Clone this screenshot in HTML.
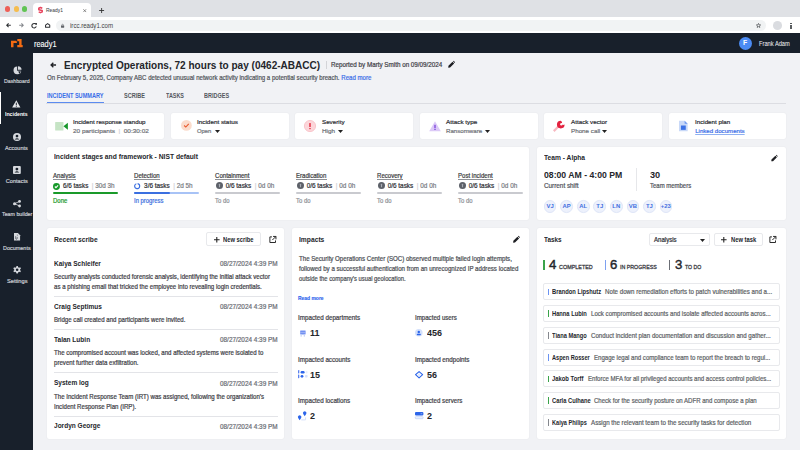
<!DOCTYPE html>
<html><head><meta charset="utf-8">
<style>
*{margin:0;padding:0;box-sizing:border-box}
html,body{width:800px;height:450px;overflow:hidden;background:#f1f2f5;font-family:"Liberation Sans",sans-serif;color:#222}
.a{position:absolute;white-space:nowrap;line-height:1}
svg{position:absolute;overflow:visible}
</style></head><body>
<div class="a" style="left:0px;top:0px;width:800px;height:17px;background:#dfe1e5;"></div>
<div class="a" style="left:5.199999999999999px;top:6.4px;width:5.2px;height:5.2px;background:#ee5f57;border-radius:50%"></div>
<div class="a" style="left:13.6px;top:6.4px;width:5.2px;height:5.2px;background:#f5bd4f;border-radius:50%"></div>
<div class="a" style="left:21.799999999999997px;top:6.4px;width:5.2px;height:5.2px;background:#61c454;border-radius:50%"></div>
<div class="a" style="left:33.1px;top:3.1px;width:58.2px;height:14px;background:#fff;border-radius:4px 4px 0 0"></div>
<svg style="left:38.1px;top:7.4px" width="5" height="6.2" viewBox="0 0 5 6.2"><path d="M4.3 1.3L2.5 0.5 0.8 1.3V2.8L4.2 3.4V4.9L2.5 5.7 0.7 4.9" stroke="#e9425c" stroke-width="1.5" fill="none" stroke-linejoin="round"/></svg>
<div class="a" style="left:46.25px;top:7.57px;font-size:5.8px;color:#45484d;-webkit-text-stroke-width:0.2px;transform:scaleX(0.8433);transform-origin:0 0;-webkit-text-stroke-width:0.05px;">Ready1</div>
<svg style="left:82.5px;top:9px" width="3.5" height="3.3" viewBox="0 0 4 4"><path d="M0.3 0.3L3.7 3.7M3.7 0.3L0.3 3.7" stroke="#555" stroke-width="0.8"/></svg>
<svg style="left:98.75px;top:8.1px" width="5.2" height="5" viewBox="0 0 5 5"><path d="M2.5 0V5M0 2.5H5" stroke="#333" stroke-width="0.9"/></svg>
<div class="a" style="left:0px;top:17px;width:800px;height:16px;background:#fff;"></div>
<div class="a" style="left:56.25px;top:20px;width:709.3px;height:11.25px;background:#f1f3f4;border-radius:6px"></div>
<svg style="left:6px;top:23.2px" width="5" height="4.6" viewBox="0 0 5 5"><path d="M5 2.5H0.9M2.6 0.5L0.6 2.5 2.6 4.5" stroke="#2d2f33" stroke-width="1.15" fill="none"/></svg>
<svg style="left:19.1px;top:23.2px" width="5" height="4.6" viewBox="0 0 5 5"><path d="M0 2.5H4.1M2.4 0.5L4.4 2.5 2.4 4.5" stroke="#85888d" stroke-width="1.1" fill="none"/></svg>
<svg style="left:31.1px;top:22.6px" width="6" height="5.3" viewBox="0 0 6 5.4"><path d="M5.1 1.6A2.3 2.3 0 1 0 5.3 3.4" stroke="#2d2f33" stroke-width="1.1" fill="none"/><path d="M3.7 0.1H5.9V2.3Z" fill="#2d2f33"/></svg>
<svg style="left:44.6px;top:23px" width="5.3" height="4.9" viewBox="0 0 5.4 5"><path d="M0.55 4.45V2.2L2.7 0.6 4.85 2.2V4.45Z" stroke="#2d2f33" stroke-width="1.05" fill="none" stroke-linejoin="round"/></svg>
<svg style="left:61.25px;top:23.6px" width="3.2" height="3.7" viewBox="0 0 4 4.5"><rect x="0" y="1.8" width="4" height="2.7" rx="0.4" fill="#5f6368"/><path d="M0.9 2V1.4A1.1 1.1 0 0 1 3.1 1.4V2" stroke="#5f6368" stroke-width="0.7" fill="none"/></svg>
<div class="a" style="left:69.75px;top:22.08px;font-size:7px;color:#3c4043;-webkit-text-stroke-width:0.2px;transform:scaleX(0.8701);transform-origin:0 0;-webkit-text-stroke-width:0;">ircc.ready1.com</div>
<svg style="left:756.2px;top:23px" width="5" height="4.9" viewBox="0 0 10 10"><path d="M5 0.8L6.2 3.8 9.4 4 6.9 6 7.7 9.2 5 7.4 2.3 9.2 3.1 6 0.6 4 3.8 3.8Z" stroke="#3c4043" stroke-width="1.3" fill="none"/></svg>
<div class="a" style="left:773px;top:21.2px;width:9px;height:8.6px;background:#dadce0;border-radius:50%"></div>
<div class="a" style="left:790.1px;top:22.9px;width:1.5px;height:1.5px;background:#3c4043;border-radius:50%"></div>
<div class="a" style="left:790.1px;top:25.1px;width:1.5px;height:1.5px;background:#3c4043;border-radius:50%"></div>
<div class="a" style="left:790.1px;top:27.3px;width:1.5px;height:1.5px;background:#3c4043;border-radius:50%"></div>
<div class="a" style="left:0px;top:33px;width:800px;height:20px;background:#18202b;"></div>
<svg style="left:11.4px;top:39.4px" width="11.7" height="8.3" viewBox="0 0 11.7 8.3"><path d="M0 1.8H4.6Q5.9 1.8 5.9 3.1V4.1H3.6V4H2.5V8.2H0Z" fill="#f56b12"/><path d="M8.2 0H10.6V6H11.7V8.2H6.3V6H8.2V2.3H6.3V0Z" fill="#f56b12"/></svg>
<div class="a" style="left:33.70px;top:39.79px;font-size:8.8px;color:#ffffff;-webkit-text-stroke-width:0.2px;transform:scaleX(0.8356);transform-origin:0 0;-webkit-text-stroke-width:0.1px;">ready1</div>
<div class="a" style="left:738.9px;top:36.8px;width:13.2px;height:13px;background:#4b8bf4;border-radius:50%"></div>
<div class="a" style="left:743.40px;top:39.22px;font-size:7.4px;color:#ffffff;font-weight:bold;transform:scaleX(0.9304);transform-origin:0 0;">F</div>
<div class="a" style="left:758.90px;top:40.08px;font-size:7px;color:#e8eaed;-webkit-text-stroke-width:0.2px;transform:scaleX(0.8163);transform-origin:0 0;-webkit-text-stroke-width:0.05px;">Frank Adam</div>
<div class="a" style="left:0px;top:53px;width:33px;height:397px;background:#18202b;"></div>
<div class="a" style="left:0px;top:91.8px;width:1.3px;height:32.7px;background:#ffffff;"></div>
<svg style="left:12.7px;top:65.7px" width="8.9" height="8.6" viewBox="0 0 10 10"><path d="M4.6 0.6A4.5 4.5 0 1 0 9.4 5.4H4.6Z" fill="#d5d8dd"/><path d="M5.6 0.2A4.4 4.4 0 0 1 9.8 4.4H5.6Z" fill="#d5d8dd"/><path d="M6 6.2H9.2L7.2 9.2Z" fill="#18202b"/></svg>
<div class="a" style="left:4.00px;top:79.10px;font-size:5.6px;color:#c9cdd3;-webkit-text-stroke-width:0.2px;transform:scaleX(0.9349);transform-origin:0 0;">Dashboard</div>
<svg style="left:12.4px;top:99.6px" width="8.6" height="7.6" viewBox="0 0 10 9"><path d="M5 0.2L9.9 8.8H0.1Z" fill="#e4e6ea"/><rect x="4.45" y="3.2" width="1.1" height="3" fill="#18202b"/><rect x="4.45" y="6.9" width="1.1" height="1.1" fill="#18202b"/></svg>
<div class="a" style="left:5.30px;top:111.77px;font-size:5.8px;color:#ffffff;font-weight:bold;transform:scaleX(0.8915);transform-origin:0 0;">Incidents</div>
<svg style="left:12.9px;top:133px" width="8" height="8" viewBox="0 0 10 10"><circle cx="5" cy="5" r="5" fill="#d5d8dd"/><circle cx="5" cy="3.9" r="1.7" fill="#18202b"/><path d="M2.2 7.7Q5 5.3 7.8 7.7V8H2.2Z" fill="#18202b"/></svg>
<div class="a" style="left:5.30px;top:145.50px;font-size:5.6px;color:#c9cdd3;-webkit-text-stroke-width:0.2px;transform:scaleX(0.9894);transform-origin:0 0;">Accounts</div>
<svg style="left:13px;top:166px" width="7.8" height="8" viewBox="0 0 10 10"><rect x="0" y="0" width="10" height="10" rx="1.2" fill="#d5d8dd"/><circle cx="5" cy="3.8" r="1.8" fill="#18202b"/><path d="M2 8.2Q5 5.2 8 8.2Z" fill="#18202b"/></svg>
<div class="a" style="left:5.80px;top:178.90px;font-size:5.6px;color:#c9cdd3;-webkit-text-stroke-width:0.2px;">Contacts</div>
<svg style="left:12.8px;top:199.7px" width="8.2" height="7.4" viewBox="0 0 10 9"><circle cx="8" cy="1.7" r="1.7" fill="#d5d8dd"/><circle cx="1.9" cy="4.5" r="1.9" fill="#d5d8dd"/><circle cx="8" cy="7.3" r="1.7" fill="#d5d8dd"/><path d="M8 1.7L1.9 4.5 8 7.3" stroke="#d5d8dd" stroke-width="1" fill="none"/></svg>
<div class="a" style="left:1.55px;top:212.30px;font-size:5.6px;color:#c9cdd3;-webkit-text-stroke-width:0.2px;transform:scaleX(0.9467);transform-origin:0 0;">Team builder</div>
<svg style="left:13.7px;top:233px" width="6.1" height="7.6" viewBox="0 0 8 10"><path d="M0 0H5.2L8 2.8V10H0Z" fill="#d5d8dd"/><path d="M2.2 4.2V7.2A1 1 0 0 0 4.2 7.2V5.2M4.4 2.2V3.5" stroke="#18202b" stroke-width="0.7" fill="none"/></svg>
<div class="a" style="left:2.90px;top:246.10px;font-size:5.6px;color:#c9cdd3;-webkit-text-stroke-width:0.2px;transform:scaleX(0.9776);transform-origin:0 0;">Documents</div>
<svg style="left:12.7px;top:266.2px" width="8.3" height="7.6" viewBox="0 0 10 10"><path d="M4.1 0H5.9L6.3 1.6 7.5 2.3 9.1 1.8 10 3.4 8.8 4.5V5.5L10 6.6 9.1 8.2 7.5 7.7 6.3 8.4 5.9 10H4.1L3.7 8.4 2.5 7.7 0.9 8.2 0 6.6 1.2 5.5V4.5L0 3.4 0.9 1.8 2.5 2.3 3.7 1.6Z" fill="#d5d8dd"/><circle cx="5" cy="5" r="1.7" fill="#18202b"/></svg>
<div class="a" style="left:6.50px;top:279.30px;font-size:5.6px;color:#c9cdd3;-webkit-text-stroke-width:0.2px;transform:scaleX(1.0126);transform-origin:0 0;">Settings</div>
<svg style="left:50px;top:62px" width="6.4" height="6" viewBox="0 0 8 8"><path d="M7.8 4H1.4M4.2 0.9L1.1 4 4.2 7.1" stroke="#222428" stroke-width="1.7" fill="none"/></svg>
<div class="a" style="left:63.80px;top:60.16px;font-size:11.5px;color:#24262b;font-weight:bold;transform:scaleX(0.8735);transform-origin:0 0;">Encrypted Operations, 72 hours to pay (0462-ABACC)</div>
<div class="a" style="left:326px;top:61px;width:0.8px;height:7.5px;background:#d3d4d8;"></div>
<div class="a" style="left:331.00px;top:62.44px;font-size:6.6px;color:#3e4046;-webkit-text-stroke-width:0.2px;transform:scaleX(0.9517);transform-origin:0 0;">Reported by Marty Smith on 09/09/2024</div>
<svg style="left:448px;top:61px" width="7" height="6.8" viewBox="0 0 10 10"><path d="M0.2 9.8L0.5 7.1 6.5 1.1 8.9 3.5 2.9 9.5Z M7.2 0.5L8.2-0.3 10.3 1.8 9.5 2.8Z" fill="#1e1f23"/></svg>
<div class="a" style="left:46.70px;top:75.04px;font-size:6.6px;color:#50535a;-webkit-text-stroke-width:0.2px;transform:scaleX(0.9228);transform-origin:0 0;">On February 5, 2025, Company ABC detected unusual network activity indicating a potential security breach. <span style="color:#3a6ee8">Read more</span></div>
<div class="a" style="left:46.70px;top:91.55px;font-size:7.2px;color:#3a6ee8;font-weight:bold;transform:scaleX(0.7760);transform-origin:0 0;">INCIDENT SUMMARY</div>
<div class="a" style="left:124.00px;top:91.55px;font-size:7.2px;color:#55585e;font-weight:bold;transform:scaleX(0.7716);transform-origin:0 0;">SCRIBE</div>
<div class="a" style="left:165.70px;top:91.55px;font-size:7.2px;color:#55585e;font-weight:bold;transform:scaleX(0.7541);transform-origin:0 0;">TASKS</div>
<div class="a" style="left:203.90px;top:91.55px;font-size:7.2px;color:#55585e;font-weight:bold;transform:scaleX(0.7653);transform-origin:0 0;">BRIDGES</div>
<div class="a" style="left:46px;top:103.2px;width:740px;height:0.9px;background:#dcdde2;"></div>
<div class="a" style="left:46.7px;top:101.9px;width:57.2px;height:1.5px;background:#5b8bf0;"></div>
<div class="a" style="left:46.5px;top:112.8px;width:117.9px;height:26.2px;background:#fff;border-radius:2px;box-shadow:0 0 1.5px rgba(30,30,70,0.08)"></div>
<div class="a" style="left:170.9px;top:112.8px;width:117.9px;height:26.2px;background:#fff;border-radius:2px;box-shadow:0 0 1.5px rgba(30,30,70,0.08)"></div>
<div class="a" style="left:295.3px;top:112.8px;width:117.9px;height:26.2px;background:#fff;border-radius:2px;box-shadow:0 0 1.5px rgba(30,30,70,0.08)"></div>
<div class="a" style="left:419.7px;top:112.8px;width:117.9px;height:26.2px;background:#fff;border-radius:2px;box-shadow:0 0 1.5px rgba(30,30,70,0.08)"></div>
<div class="a" style="left:544.1px;top:112.8px;width:117.9px;height:26.2px;background:#fff;border-radius:2px;box-shadow:0 0 1.5px rgba(30,30,70,0.08)"></div>
<div class="a" style="left:668.5px;top:112.8px;width:117.9px;height:26.2px;background:#fff;border-radius:2px;box-shadow:0 0 1.5px rgba(30,30,70,0.08)"></div>
<svg style="left:55px;top:122px" width="13" height="8.8" viewBox="0 0 13 9"><rect x="0" y="0" width="8.5" height="8.8" rx="0.6" fill="#c6e4c5"/><path d="M13 0.8V8L8.5 4.4Z" fill="#17972a"/></svg>
<div class="a" style="left:73.00px;top:119.02px;font-size:6.1px;color:#2c2e33;-webkit-text-stroke-width:0.2px;transform:scaleX(1.0146);transform-origin:0 0;">Incident response standup</div>
<div class="a" style="left:73.00px;top:128.02px;font-size:6.1px;color:#6f7278;-webkit-text-stroke-width:0.2px;transform:scaleX(1.0571);transform-origin:0 0;">20 participants&nbsp; <span style="color:#d0d1d5">|</span> &nbsp;00:30:02</div>
<svg style="left:180.7px;top:119.9px" width="10.8" height="10.8" viewBox="0 0 11 11"><circle cx="5.5" cy="5.5" r="5.5" fill="#fbdccc"/><path d="M3.2 5.6L4.9 7.2 7.9 3.9" stroke="#e8572a" stroke-width="1.1" fill="none"/></svg>
<div class="a" style="left:197.30px;top:119.02px;font-size:6.1px;color:#2c2e33;-webkit-text-stroke-width:0.2px;transform:scaleX(1.0395);transform-origin:0 0;">Incident status</div>
<div class="a" style="left:197.30px;top:128.02px;font-size:6.1px;color:#6f7278;-webkit-text-stroke-width:0.2px;transform:scaleX(0.9588);transform-origin:0 0;">Open</div>
<svg style="left:214.6px;top:129.8px" width="5" height="3" viewBox="0 0 5 3"><path d="M0 0H5L2.5 3Z" fill="#222"/></svg>
<svg style="left:304px;top:120px" width="12" height="12" viewBox="0 0 12 12"><circle cx="6" cy="6" r="5.6" fill="#fcd6da" stroke="#f7bcc3" stroke-width="0.8"/><rect x="5.3" y="2.9" width="1.4" height="4.2" rx="0.4" fill="#e3243a"/><rect x="5.3" y="7.9" width="1.4" height="1.3" rx="0.4" fill="#e3243a"/></svg>
<div class="a" style="left:321.80px;top:119.02px;font-size:6.1px;color:#2c2e33;-webkit-text-stroke-width:0.2px;transform:scaleX(1.0218);transform-origin:0 0;">Severity</div>
<div class="a" style="left:321.80px;top:128.02px;font-size:6.1px;color:#6f7278;-webkit-text-stroke-width:0.2px;transform:scaleX(1.0371);transform-origin:0 0;">High</div>
<svg style="left:337.8px;top:129.8px" width="5" height="3" viewBox="0 0 5 3"><path d="M0 0H5L2.5 3Z" fill="#222"/></svg>
<svg style="left:429px;top:120.5px" width="12" height="10.5" viewBox="0 0 12 10.5"><path d="M6 0.3L11.8 10.3H0.2Z" fill="#dcc9f7"/><rect x="5.45" y="3.8" width="1.1" height="3.4" fill="#6a2ad8"/><rect x="5.45" y="7.9" width="1.1" height="1.1" fill="#6a2ad8"/></svg>
<div class="a" style="left:446.20px;top:119.02px;font-size:6.1px;color:#2c2e33;-webkit-text-stroke-width:0.2px;transform:scaleX(1.0376);transform-origin:0 0;">Attack type</div>
<div class="a" style="left:446.20px;top:128.02px;font-size:6.1px;color:#6f7278;-webkit-text-stroke-width:0.2px;transform:scaleX(1.0075);transform-origin:0 0;">Ransomware</div>
<svg style="left:484.5px;top:129.8px" width="5" height="3" viewBox="0 0 5 3"><path d="M0 0H5L2.5 3Z" fill="#222"/></svg>
<svg style="left:553px;top:120.2px" width="12.3" height="12" viewBox="0 0 12.5 12"><path d="M0.8 11.2L5.2 6.8" stroke="#f7b8c0" stroke-width="2.2"/><path d="M7.9 0.7A3.9 3.9 0 1 0 11.8 4.6L10.2 4.9 8.9 3.6 9.2 1.9Z" fill="#e3223f"/><circle cx="8.5" cy="4.2" r="1.2" fill="#fff"/></svg>
<div class="a" style="left:570.80px;top:119.02px;font-size:6.1px;color:#2c2e33;-webkit-text-stroke-width:0.2px;transform:scaleX(1.0267);transform-origin:0 0;">Attack vector</div>
<div class="a" style="left:570.80px;top:128.02px;font-size:6.1px;color:#6f7278;-webkit-text-stroke-width:0.2px;transform:scaleX(1.0250);transform-origin:0 0;">Phone call</div>
<svg style="left:601.8px;top:129.8px" width="5" height="3" viewBox="0 0 5 3"><path d="M0 0H5L2.5 3Z" fill="#222"/></svg>
<svg style="left:679px;top:120px" width="8.7" height="12" viewBox="0 0 9 12"><path d="M0 0.5H5.8L9 3.7V11.5H0Z" fill="#c9d9f8"/><path d="M5.8 0.5V3.7H9Z" fill="#6f9af0"/><rect x="2" y="5.5" width="5" height="4.5" fill="#3c72e6"/></svg>
<div class="a" style="left:694.90px;top:119.02px;font-size:6.1px;color:#2c2e33;-webkit-text-stroke-width:0.2px;transform:scaleX(1.0177);transform-origin:0 0;">Incident plan</div>
<div class="a" style="left:695.20px;top:128.02px;font-size:6.1px;color:#3a6ee8;-webkit-text-stroke-width:0.2px;text-decoration:underline;text-decoration-color:#8fb0f2;">Linked documents</div>
<div class="a" style="left:47px;top:146.8px;width:481.5px;height:73.7px;background:#fff;border-radius:2px;box-shadow:0 0 1.5px rgba(30,30,70,0.08)"></div>
<div class="a" style="left:53.70px;top:154.46px;font-size:7.1px;color:#24262b;font-weight:bold;transform:scaleX(0.9486);transform-origin:0 0;">Incident stages and framework - NIST default</div>
<div class="a" style="left:53.30px;top:172.98px;font-size:6.4px;color:#3a3c41;-webkit-text-stroke-width:0.2px;transform:scaleX(0.9500);transform-origin:0 0;">Analysis</div>
<div class="a" style="left:53.3px;top:178.9px;width:22.6px;height:0.7px;background:#8e9196;"></div>
<svg style="left:53.199999999999996px;top:182.5px" width="6.9" height="6.9" viewBox="0 0 10 10"><circle cx="5" cy="5" r="5" fill="#17992a"/><path d="M2.7 5.1L4.3 6.7 7.4 3.5" stroke="#fff" stroke-width="1.6" fill="none"/></svg>
<div class="a" style="left:63.10px;top:182.58px;font-size:6.4px;color:#2c2e33;-webkit-text-stroke-width:0.2px;transform:scaleX(0.9887);transform-origin:0 0;">6/6 tasks <span style="color:#d0d1d5">&nbsp;|&nbsp;</span><span style="color:#7a7d83">30d 3h</span></div>
<div class="a" style="left:53.3px;top:192.2px;width:64.5px;height:2px;background:#1a9a2a;border-radius:1px"></div>
<div class="a" style="left:53.30px;top:197.68px;font-size:6.4px;color:#1a9a2a;-webkit-text-stroke-width:0.2px;transform:scaleX(0.9349);transform-origin:0 0;">Done</div>
<div class="a" style="left:134.30px;top:172.98px;font-size:6.4px;color:#3a3c41;-webkit-text-stroke-width:0.2px;transform:scaleX(0.9500);transform-origin:0 0;">Detection</div>
<div class="a" style="left:134.3px;top:178.9px;width:25.7px;height:0.7px;background:#8e9196;"></div>
<svg style="left:134.3px;top:182.9px" width="6.3" height="6.3" viewBox="0 0 10 10"><circle cx="5" cy="5" r="4" stroke="#3b6fe0" stroke-width="1.8" fill="none" stroke-dasharray="22.5 2.6" transform="rotate(-80 5 5)"/></svg>
<div class="a" style="left:144.10px;top:182.58px;font-size:6.4px;color:#2c2e33;-webkit-text-stroke-width:0.2px;">3/6 tasks <span style="color:#d0d1d5">&nbsp;|&nbsp;</span><span style="color:#7a7d83">2d 5h</span></div>
<div class="a" style="left:134.3px;top:192.2px;width:64.5px;height:2px;background:#a8c3f6;border-radius:1px"></div>
<div class="a" style="left:134.3px;top:192.2px;width:35.5px;height:2px;background:#3b6fe0;border-radius:1px"></div>
<div class="a" style="left:134.30px;top:197.68px;font-size:6.4px;color:#3b6fe0;-webkit-text-stroke-width:0.2px;transform:scaleX(0.9210);transform-origin:0 0;">In progress</div>
<div class="a" style="left:215.30px;top:172.98px;font-size:6.4px;color:#3a3c41;-webkit-text-stroke-width:0.2px;transform:scaleX(0.9500);transform-origin:0 0;">Containment</div>
<div class="a" style="left:215.3px;top:178.9px;width:34.5px;height:0.7px;background:#8e9196;"></div>
<svg style="left:215.5px;top:182.4px" width="7" height="7" viewBox="0 0 10 10"><circle cx="5" cy="5" r="5" fill="#5d6169"/><rect x="4.2" y="2.4" width="1.6" height="5.2" rx="0.8" fill="#a9adb5"/></svg>
<div class="a" style="left:225.70px;top:182.58px;font-size:6.4px;color:#2c2e33;-webkit-text-stroke-width:0.2px;">0/6 tasks <span style="color:#d0d1d5">&nbsp;|&nbsp;</span><span style="color:#7a7d83">0d 0h</span></div>
<div class="a" style="left:215.3px;top:192.2px;width:64.5px;height:2px;background:#c9cacf;border-radius:1px"></div>
<div class="a" style="left:215.30px;top:197.68px;font-size:6.4px;color:#8d9096;-webkit-text-stroke-width:0.2px;transform:scaleX(0.9266);transform-origin:0 0;">To do</div>
<div class="a" style="left:296.30px;top:172.98px;font-size:6.4px;color:#3a3c41;-webkit-text-stroke-width:0.2px;transform:scaleX(0.9500);transform-origin:0 0;">Eradication</div>
<div class="a" style="left:296.3px;top:178.9px;width:30.4px;height:0.7px;background:#8e9196;"></div>
<svg style="left:296.5px;top:182.4px" width="7" height="7" viewBox="0 0 10 10"><circle cx="5" cy="5" r="5" fill="#5d6169"/><rect x="4.2" y="2.4" width="1.6" height="5.2" rx="0.8" fill="#a9adb5"/></svg>
<div class="a" style="left:306.70px;top:182.58px;font-size:6.4px;color:#2c2e33;-webkit-text-stroke-width:0.2px;">0/6 tasks <span style="color:#d0d1d5">&nbsp;|&nbsp;</span><span style="color:#7a7d83">0d 0h</span></div>
<div class="a" style="left:296.3px;top:192.2px;width:64.5px;height:2px;background:#c9cacf;border-radius:1px"></div>
<div class="a" style="left:296.30px;top:197.68px;font-size:6.4px;color:#8d9096;-webkit-text-stroke-width:0.2px;transform:scaleX(0.9266);transform-origin:0 0;">To do</div>
<div class="a" style="left:377.30px;top:172.98px;font-size:6.4px;color:#3a3c41;-webkit-text-stroke-width:0.2px;transform:scaleX(0.9500);transform-origin:0 0;">Recovery</div>
<div class="a" style="left:377.3px;top:178.9px;width:25.7px;height:0.7px;background:#8e9196;"></div>
<svg style="left:377.5px;top:182.4px" width="7" height="7" viewBox="0 0 10 10"><circle cx="5" cy="5" r="5" fill="#5d6169"/><rect x="4.2" y="2.4" width="1.6" height="5.2" rx="0.8" fill="#a9adb5"/></svg>
<div class="a" style="left:387.70px;top:182.58px;font-size:6.4px;color:#2c2e33;-webkit-text-stroke-width:0.2px;">0/6 tasks <span style="color:#d0d1d5">&nbsp;|&nbsp;</span><span style="color:#7a7d83">0d 0h</span></div>
<div class="a" style="left:377.3px;top:192.2px;width:64.5px;height:2px;background:#c9cacf;border-radius:1px"></div>
<div class="a" style="left:377.30px;top:197.68px;font-size:6.4px;color:#8d9096;-webkit-text-stroke-width:0.2px;transform:scaleX(0.9266);transform-origin:0 0;">To do</div>
<div class="a" style="left:458.30px;top:172.98px;font-size:6.4px;color:#3a3c41;-webkit-text-stroke-width:0.2px;transform:scaleX(0.9500);transform-origin:0 0;">Post incident</div>
<div class="a" style="left:458.3px;top:178.9px;width:34.8px;height:0.7px;background:#8e9196;"></div>
<svg style="left:458.5px;top:182.4px" width="7" height="7" viewBox="0 0 10 10"><circle cx="5" cy="5" r="5" fill="#5d6169"/><rect x="4.2" y="2.4" width="1.6" height="5.2" rx="0.8" fill="#a9adb5"/></svg>
<div class="a" style="left:468.70px;top:182.58px;font-size:6.4px;color:#2c2e33;-webkit-text-stroke-width:0.2px;">0/6 tasks <span style="color:#d0d1d5">&nbsp;|&nbsp;</span><span style="color:#7a7d83">0d 0h</span></div>
<div class="a" style="left:458.3px;top:192.2px;width:64.5px;height:2px;background:#c9cacf;border-radius:1px"></div>
<div class="a" style="left:458.30px;top:197.68px;font-size:6.4px;color:#8d9096;-webkit-text-stroke-width:0.2px;transform:scaleX(0.9266);transform-origin:0 0;">To do</div>
<div class="a" style="left:537.2px;top:146.8px;width:248.5px;height:73.7px;background:#fff;border-radius:2px;box-shadow:0 0 1.5px rgba(30,30,70,0.08)"></div>
<div class="a" style="left:543.60px;top:154.05px;font-size:7.2px;color:#24262b;font-weight:bold;transform:scaleX(0.9267);transform-origin:0 0;">Team - Alpha</div>
<svg style="left:770.5px;top:155px" width="6.8" height="6.5" viewBox="0 0 10 10"><path d="M0.2 9.8L0.5 7.1 6.5 1.1 8.9 3.5 2.9 9.5Z M7.2 0.5L8.2-0.3 10.3 1.8 9.5 2.8Z" fill="#1e1f23"/></svg>
<div class="a" style="left:543.60px;top:171.26px;font-size:8.4px;color:#24262b;font-weight:bold;transform:scaleX(1.0347);transform-origin:0 0;">08:00 AM - 4:00 PM</div>
<div class="a" style="left:543.60px;top:183.18px;font-size:6.4px;color:#50535a;-webkit-text-stroke-width:0.2px;transform:scaleX(0.9929);transform-origin:0 0;">Current shift</div>
<div class="a" style="left:635.9px;top:168px;width:0.8px;height:23px;background:#e6e7ea;"></div>
<div class="a" style="left:649.80px;top:171.26px;font-size:8.4px;color:#24262b;font-weight:bold;transform:scaleX(1.0940);transform-origin:0 0;">30</div>
<div class="a" style="left:649.80px;top:183.18px;font-size:6.4px;color:#50535a;-webkit-text-stroke-width:0.2px;transform:scaleX(0.9343);transform-origin:0 0;">Team members</div>
<div class="a" style="left:543.90px;top:200px;width:12.6px;height:12.6px;border-radius:50%;background:#edf1fc;border:0.8px solid #dfe6f8;color:#3f6fdf;font-size:5.9px;font-weight:bold;text-align:center;line-height:11.4px">VJ</div>
<div class="a" style="left:560.42px;top:200px;width:12.6px;height:12.6px;border-radius:50%;background:#edf1fc;border:0.8px solid #dfe6f8;color:#3f6fdf;font-size:5.9px;font-weight:bold;text-align:center;line-height:11.4px">AP</div>
<div class="a" style="left:576.94px;top:200px;width:12.6px;height:12.6px;border-radius:50%;background:#edf1fc;border:0.8px solid #dfe6f8;color:#3f6fdf;font-size:5.9px;font-weight:bold;text-align:center;line-height:11.4px">AL</div>
<div class="a" style="left:593.46px;top:200px;width:12.6px;height:12.6px;border-radius:50%;background:#edf1fc;border:0.8px solid #dfe6f8;color:#3f6fdf;font-size:5.9px;font-weight:bold;text-align:center;line-height:11.4px">TJ</div>
<div class="a" style="left:609.98px;top:200px;width:12.6px;height:12.6px;border-radius:50%;background:#edf1fc;border:0.8px solid #dfe6f8;color:#3f6fdf;font-size:5.9px;font-weight:bold;text-align:center;line-height:11.4px">LN</div>
<div class="a" style="left:626.50px;top:200px;width:12.6px;height:12.6px;border-radius:50%;background:#edf1fc;border:0.8px solid #dfe6f8;color:#3f6fdf;font-size:5.9px;font-weight:bold;text-align:center;line-height:11.4px">VB</div>
<div class="a" style="left:643.02px;top:200px;width:12.6px;height:12.6px;border-radius:50%;background:#edf1fc;border:0.8px solid #dfe6f8;color:#3f6fdf;font-size:5.9px;font-weight:bold;text-align:center;line-height:11.4px">TJ</div>
<div class="a" style="left:659.54px;top:200px;width:12.6px;height:12.6px;border-radius:50%;background:#edf1fc;border:0.8px solid #dfe6f8;color:#3f6fdf;font-size:5.9px;font-weight:bold;text-align:center;line-height:11.4px">+23</div>
<div class="a" style="left:47.1px;top:228.3px;width:237.3px;height:211.1px;background:#fff;border-radius:2px;box-shadow:0 0 1.5px rgba(30,30,70,0.08)"></div>
<div class="a" style="left:53.70px;top:236.05px;font-size:7.2px;color:#24262b;font-weight:bold;transform:scaleX(0.9252);transform-origin:0 0;">Recent scribe</div>
<div class="a" style="left:206.4px;top:232.4px;width:54.3px;height:13.9px;background:#fff;border:0.8px solid #e8e9ec;border-radius:2px"></div>
<svg style="left:213.8px;top:236.6px" width="5.6" height="5.6" viewBox="0 0 6 6"><path d="M3 0V6M0 3H6" stroke="#222" stroke-width="1.15"/></svg>
<div class="a" style="left:223.30px;top:236.99px;font-size:6.3px;color:#24262b;font-weight:bold;transform:scaleX(0.9199);transform-origin:0 0;">New scribe</div>
<svg style="left:268.7px;top:235.8px" width="7.4" height="7.4" viewBox="0 0 10 10"><path d="M4 1.2H1.2V8.8H8.8V6" stroke="#222" stroke-width="1.3" fill="none"/><path d="M5.5 0.6H9.4V4.5M9.2 0.8L4.5 5.5" stroke="#222" stroke-width="1.3" fill="none"/></svg>
<div class="a" style="left:53.70px;top:260.86px;font-size:7.1px;color:#24262b;font-weight:bold;transform:scaleX(0.9200);transform-origin:0 0;">Kaiya Schleifer</div>
<div class="a" style="left:220.30px;top:261.19px;font-size:6.3px;color:#6b6e75;-webkit-text-stroke-width:0.2px;transform:scaleX(1.0153);transform-origin:0 0;">08/27/2024 4:39 PM</div>
<div class="a" style="left:53.70px;top:274.19px;font-size:6.3px;color:#3e4046;-webkit-text-stroke-width:0.2px;transform:scaleX(0.9700);transform-origin:0 0;">Security analysts conducted forensic analysis, identifying the initial attack vector</div>
<div class="a" style="left:53.70px;top:284.19px;font-size:6.3px;color:#3e4046;-webkit-text-stroke-width:0.2px;transform:scaleX(0.9700);transform-origin:0 0;">as a phishing email that tricked the employee into revealing login credentials.</div>
<div class="a" style="left:53.7px;top:296px;width:224.2px;height:0.8px;background:#e3e4e8;"></div>
<div class="a" style="left:53.70px;top:304.06px;font-size:7.1px;color:#24262b;font-weight:bold;transform:scaleX(0.9200);transform-origin:0 0;">Craig Septimus</div>
<div class="a" style="left:220.30px;top:304.39px;font-size:6.3px;color:#6b6e75;-webkit-text-stroke-width:0.2px;transform:scaleX(1.0153);transform-origin:0 0;">08/27/2024 4:39 PM</div>
<div class="a" style="left:53.70px;top:317.39px;font-size:6.3px;color:#3e4046;-webkit-text-stroke-width:0.2px;transform:scaleX(0.9700);transform-origin:0 0;">Bridge call created and participants were invited.</div>
<div class="a" style="left:53.7px;top:328.75px;width:224.2px;height:0.8px;background:#e3e4e8;"></div>
<div class="a" style="left:53.70px;top:336.66px;font-size:7.1px;color:#24262b;font-weight:bold;transform:scaleX(0.9200);transform-origin:0 0;">Talan Lubin</div>
<div class="a" style="left:220.30px;top:336.99px;font-size:6.3px;color:#6b6e75;-webkit-text-stroke-width:0.2px;transform:scaleX(1.0153);transform-origin:0 0;">08/27/2024 4:39 PM</div>
<div class="a" style="left:53.70px;top:349.99px;font-size:6.3px;color:#3e4046;-webkit-text-stroke-width:0.2px;transform:scaleX(0.9700);transform-origin:0 0;">The compromised account was locked, and affected systems were isolated to</div>
<div class="a" style="left:53.70px;top:359.99px;font-size:6.3px;color:#3e4046;-webkit-text-stroke-width:0.2px;transform:scaleX(0.9700);transform-origin:0 0;">prevent further data exfiltration.</div>
<div class="a" style="left:53.7px;top:372.2px;width:224.2px;height:0.8px;background:#e3e4e8;"></div>
<div class="a" style="left:53.70px;top:380.46px;font-size:7.1px;color:#24262b;font-weight:bold;transform:scaleX(0.9200);transform-origin:0 0;">System log</div>
<div class="a" style="left:220.30px;top:380.79px;font-size:6.3px;color:#6b6e75;-webkit-text-stroke-width:0.2px;transform:scaleX(1.0153);transform-origin:0 0;">08/27/2024 4:39 PM</div>
<div class="a" style="left:53.70px;top:393.79px;font-size:6.3px;color:#3e4046;-webkit-text-stroke-width:0.2px;transform:scaleX(0.9700);transform-origin:0 0;">The Incident Response Team (IRT) was assigned, following the organization’s</div>
<div class="a" style="left:53.70px;top:403.79px;font-size:6.3px;color:#3e4046;-webkit-text-stroke-width:0.2px;transform:scaleX(0.9700);transform-origin:0 0;">Incident Response Plan (IRP).</div>
<div class="a" style="left:53.7px;top:416px;width:224.2px;height:0.8px;background:#e3e4e8;"></div>
<div class="a" style="left:53.70px;top:423.46px;font-size:7.1px;color:#24262b;font-weight:bold;transform:scaleX(0.9200);transform-origin:0 0;">Jordyn George</div>
<div class="a" style="left:220.30px;top:423.79px;font-size:6.3px;color:#6b6e75;-webkit-text-stroke-width:0.2px;transform:scaleX(1.0153);transform-origin:0 0;">08/27/2024 4:39 PM</div>
<div class="a" style="left:292.1px;top:228.3px;width:236.5px;height:211.1px;background:#fff;border-radius:2px;box-shadow:0 0 1.5px rgba(30,30,70,0.08)"></div>
<div class="a" style="left:298.70px;top:235.85px;font-size:7.2px;color:#24262b;font-weight:bold;transform:scaleX(0.9333);transform-origin:0 0;">Impacts</div>
<svg style="left:513.4px;top:236px" width="6.8" height="6.8" viewBox="0 0 10 10"><path d="M0.2 9.8L0.5 7.1 6.5 1.1 8.9 3.5 2.9 9.5Z M7.2 0.5L8.2-0.3 10.3 1.8 9.5 2.8Z" fill="#1e1f23"/></svg>
<div class="a" style="left:298.70px;top:255.99px;font-size:6.3px;color:#4a4d53;-webkit-text-stroke-width:0.2px;transform:scaleX(0.9732);transform-origin:0 0;">The Security Operations Center (SOC) observed multiple failed login attempts,</div>
<div class="a" style="left:298.70px;top:265.99px;font-size:6.3px;color:#4a4d53;-webkit-text-stroke-width:0.2px;transform:scaleX(0.9738);transform-origin:0 0;">followed by a successful authentication from an unrecognized IP address located</div>
<div class="a" style="left:298.70px;top:275.99px;font-size:6.3px;color:#4a4d53;-webkit-text-stroke-width:0.2px;transform:scaleX(0.9261);transform-origin:0 0;">outside the company’s usual geolocation.</div>
<div class="a" style="left:298.20px;top:295.64px;font-size:5.4px;color:#2f66ee;font-weight:bold;transform:scaleX(0.9170);transform-origin:0 0;-webkit-text-stroke-width:0.15px;">Read more</div>
<div class="a" style="left:298.00px;top:315.39px;font-size:6.3px;color:#3e4046;-webkit-text-stroke-width:0.2px;transform:scaleX(0.9923);transform-origin:0 0;">Impacted departments</div>
<div class="a" style="left:310.00px;top:328.92px;font-size:8.6px;color:#24262b;font-weight:bold;transform:scaleX(1.0437);transform-origin:0 0;">11</div>
<div class="a" style="left:415.00px;top:315.39px;font-size:6.3px;color:#3e4046;-webkit-text-stroke-width:0.2px;transform:scaleX(0.9730);transform-origin:0 0;">Impacted users</div>
<div class="a" style="left:427.00px;top:328.92px;font-size:8.6px;color:#24262b;font-weight:bold;transform:scaleX(1.0437);transform-origin:0 0;">456</div>
<div class="a" style="left:298.00px;top:356.89px;font-size:6.3px;color:#3e4046;-webkit-text-stroke-width:0.2px;transform:scaleX(0.9908);transform-origin:0 0;">Impacted accounts</div>
<div class="a" style="left:310.00px;top:370.52px;font-size:8.6px;color:#24262b;font-weight:bold;transform:scaleX(1.0437);transform-origin:0 0;">15</div>
<div class="a" style="left:415.00px;top:356.89px;font-size:6.3px;color:#3e4046;-webkit-text-stroke-width:0.2px;transform:scaleX(0.9891);transform-origin:0 0;">Impacted endpoints</div>
<div class="a" style="left:427.00px;top:370.52px;font-size:8.6px;color:#24262b;font-weight:bold;transform:scaleX(1.0437);transform-origin:0 0;">56</div>
<div class="a" style="left:298.00px;top:398.39px;font-size:6.3px;color:#3e4046;-webkit-text-stroke-width:0.2px;transform:scaleX(0.9916);transform-origin:0 0;">Impacted locations</div>
<div class="a" style="left:310.00px;top:412.12px;font-size:8.6px;color:#24262b;font-weight:bold;transform:scaleX(1.0437);transform-origin:0 0;">2</div>
<div class="a" style="left:415.00px;top:398.39px;font-size:6.3px;color:#3e4046;-webkit-text-stroke-width:0.2px;transform:scaleX(0.9789);transform-origin:0 0;">Impacted servers</div>
<div class="a" style="left:427.00px;top:412.12px;font-size:8.6px;color:#24262b;font-weight:bold;transform:scaleX(1.0437);transform-origin:0 0;">2</div>
<svg style="left:299.6px;top:329.6px" width="5.8" height="7.2" viewBox="0 0 6.5 7.3"><rect x="0.2" y="0.2" width="6.1" height="4.4" rx="0.4" fill="#7391f2"/><rect x="0.3" y="2" width="5.6" height="0.5" fill="#c8d4f8"/><rect x="0.6" y="4.8" width="1.4" height="2.3" fill="#c9d5f7"/><rect x="4.2" y="4.8" width="1.4" height="2.3" fill="#c9d5f7"/></svg>
<svg style="left:415.3px;top:328.5px" width="7.6" height="7.6" viewBox="0 0 10 10"><circle cx="5" cy="5" r="5" fill="#d3e0fb"/><circle cx="5" cy="3.9" r="1.6" fill="#2c65ea"/><rect x="2.4" y="6.3" width="5.2" height="2" rx="0.6" fill="#2c65ea"/></svg>
<svg style="left:298.2px;top:370px" width="10" height="8.4" viewBox="0 0 10 8.4"><rect x="0" y="0" width="1.3" height="3.5" rx="0.4" fill="#5b82f0"/><rect x="0" y="4.6" width="1.3" height="3.6" rx="0.4" fill="#5b82f0"/><rect x="2.6" y="1" width="4" height="2.5" rx="1.2" fill="#2c65ea"/><circle cx="4" cy="6.3" r="1.4" fill="#2c65ea"/><rect x="7" y="5" width="2.6" height="2.6" rx="0.8" fill="#d5e0fb"/><rect x="7.6" y="1" width="2" height="2.4" rx="0.8" fill="#e8eefc"/></svg>
<svg style="left:415px;top:370.8px" width="8.2" height="7.4" viewBox="0 0 10 9"><path d="M5 0.7L9.3 4.5 5 8.3 0.7 4.5Z" stroke="#2c65ea" stroke-width="1.4" fill="none" stroke-linejoin="round"/><circle cx="5" cy="4.5" r="1.5" fill="#dfe8fc"/></svg>
<svg style="left:297.8px;top:411.8px" width="9.2" height="8.4" viewBox="0 0 10 9"><path d="M1.8 9L0.2 6.4A1.9 1.9 0 1 1 3.4 6.4Z" fill="#2c65ea"/><path d="M7.3 4.6L5.7 2A1.9 1.9 0 1 1 8.9 2Z" fill="#2c65ea"/><path d="M3.5 8.5H8.2V5.8" stroke="#d0dcfa" stroke-width="1" fill="none"/></svg>
<svg style="left:415px;top:412.3px" width="8.4" height="7" viewBox="0 0 9 7.5"><rect x="0" y="0" width="9" height="3.8" rx="1.2" fill="#2c65ea"/><rect x="6" y="1.5" width="1.8" height="0.8" fill="#9fb9f7"/><rect x="0.3" y="5" width="8.4" height="2.2" rx="0.8" stroke="#b9cbf8" stroke-width="0.7" fill="#eef3fd"/></svg>
<div class="a" style="left:537.1px;top:228.3px;width:248.8px;height:211.1px;background:#fff;border-radius:2px;box-shadow:0 0 1.5px rgba(30,30,70,0.08)"></div>
<div class="a" style="left:543.50px;top:235.85px;font-size:7.2px;color:#24262b;font-weight:bold;transform:scaleX(0.8857);transform-origin:0 0;">Tasks</div>
<div class="a" style="left:649.3px;top:233px;width:61px;height:13.3px;background:#fff;border:0.8px solid #e8e9ec;border-radius:2px"></div>
<div class="a" style="left:654.20px;top:237.09px;font-size:6.3px;color:#2c2e33;-webkit-text-stroke-width:0.2px;transform:scaleX(0.9630);transform-origin:0 0;">Analysis</div>
<svg style="left:700.3px;top:239px" width="5" height="3" viewBox="0 0 5 3"><path d="M0 0H5L2.5 3Z" fill="#222"/></svg>
<div class="a" style="left:714.2px;top:233px;width:48.9px;height:13.3px;background:#fff;border:0.8px solid #e8e9ec;border-radius:2px"></div>
<svg style="left:720.6px;top:236.9px" width="5.6" height="5.6" viewBox="0 0 6 6"><path d="M3 0V6M0 3H6" stroke="#222" stroke-width="1.15"/></svg>
<div class="a" style="left:730.80px;top:236.99px;font-size:6.3px;color:#24262b;font-weight:bold;transform:scaleX(0.9217);transform-origin:0 0;">New task</div>
<svg style="left:769.3px;top:236.3px" width="7.4" height="7.4" viewBox="0 0 10 10"><path d="M4 1.2H1.2V8.8H8.8V6" stroke="#222" stroke-width="1.3" fill="none"/><path d="M5.5 0.6H9.4V4.5M9.2 0.8L4.5 5.5" stroke="#222" stroke-width="1.3" fill="none"/></svg>
<div class="a" style="left:543.4px;top:259.7px;width:1.2px;height:10.6px;background:#3aa34a;"></div>
<div class="a" style="left:604.7px;top:259.7px;width:1.2px;height:10.6px;background:#7ea1f0;"></div>
<div class="a" style="left:669.2px;top:259.7px;width:1.2px;height:10.6px;background:#6b6e75;"></div>
<div class="a" style="left:549.20px;top:257.54px;font-size:13.5px;color:#24262b;-webkit-text-stroke-width:0.2px;transform:scaleX(0.9743);transform-origin:0 0;-webkit-text-stroke-width:0.45px;">4</div>
<div class="a" style="left:610.00px;top:257.54px;font-size:13.5px;color:#24262b;-webkit-text-stroke-width:0.2px;transform:scaleX(0.9743);transform-origin:0 0;-webkit-text-stroke-width:0.45px;">6</div>
<div class="a" style="left:674.60px;top:257.54px;font-size:13.5px;color:#24262b;-webkit-text-stroke-width:0.2px;transform:scaleX(0.9743);transform-origin:0 0;-webkit-text-stroke-width:0.45px;">3</div>
<div class="a" style="left:559.00px;top:264.01px;font-size:6.2px;color:#3e4046;-webkit-text-stroke-width:0.2px;transform:scaleX(0.8758);transform-origin:0 0;-webkit-text-stroke-width:0.3px;">COMPLETED</div>
<div class="a" style="left:620.00px;top:264.01px;font-size:6.2px;color:#3e4046;-webkit-text-stroke-width:0.2px;transform:scaleX(0.8546);transform-origin:0 0;-webkit-text-stroke-width:0.3px;">IN PROGRESS</div>
<div class="a" style="left:684.90px;top:264.01px;font-size:6.2px;color:#3e4046;-webkit-text-stroke-width:0.2px;transform:scaleX(0.8346);transform-origin:0 0;-webkit-text-stroke-width:0.3px;">TO DO</div>
<div class="a" style="left:543px;top:283.3px;width:236.5px;height:17px;background:#fff;border:0.8px solid #e8e9ec;border-radius:2px"></div>
<div class="a" style="left:548.2px;top:288.6px;width:1.3px;height:6.8px;background:#6b93f2;"></div>
<div class="a" style="left:551.90px;top:289.26px;font-size:6.5px;color:#24262b;font-weight:bold;transform:scaleX(0.8905);transform-origin:0 0;">Brandon Lipshutz</div>
<div class="a" style="left:604.90px;top:289.26px;font-size:6.5px;color:#5c5f65;-webkit-text-stroke-width:0.2px;transform:scaleX(0.9483);transform-origin:0 0;">Note down remediation efforts to patch vulnerabilities and a...</div>
<div class="a" style="left:543px;top:305.1px;width:236.5px;height:17px;background:#fff;border:0.8px solid #e8e9ec;border-radius:2px"></div>
<div class="a" style="left:548.2px;top:310.40000000000003px;width:1.3px;height:6.8px;background:#3aa34a;"></div>
<div class="a" style="left:551.90px;top:311.06px;font-size:6.5px;color:#24262b;font-weight:bold;transform:scaleX(0.8842);transform-origin:0 0;">Hanna Lubin</div>
<div class="a" style="left:590.70px;top:311.06px;font-size:6.5px;color:#5c5f65;-webkit-text-stroke-width:0.2px;transform:scaleX(0.9385);transform-origin:0 0;">Lock compromised accounts and isolate affected accounts acros...</div>
<div class="a" style="left:543px;top:326.8px;width:236.5px;height:17px;background:#fff;border:0.8px solid #e8e9ec;border-radius:2px"></div>
<div class="a" style="left:548.2px;top:332.1px;width:1.3px;height:6.8px;background:#85888e;"></div>
<div class="a" style="left:551.90px;top:332.76px;font-size:6.5px;color:#24262b;font-weight:bold;transform:scaleX(0.8784);transform-origin:0 0;">Tiana Mango</div>
<div class="a" style="left:590.70px;top:332.76px;font-size:6.5px;color:#5c5f65;-webkit-text-stroke-width:0.2px;transform:scaleX(0.9467);transform-origin:0 0;">Conduct incident plan documentation and discussion and gather...</div>
<div class="a" style="left:543px;top:348.6px;width:236.5px;height:17px;background:#fff;border:0.8px solid #e8e9ec;border-radius:2px"></div>
<div class="a" style="left:548.2px;top:353.90000000000003px;width:1.3px;height:6.8px;background:#6b93f2;"></div>
<div class="a" style="left:551.90px;top:354.56px;font-size:6.5px;color:#24262b;font-weight:bold;transform:scaleX(0.8647);transform-origin:0 0;">Aspen Rosser</div>
<div class="a" style="left:594.10px;top:354.56px;font-size:6.5px;color:#5c5f65;-webkit-text-stroke-width:0.2px;transform:scaleX(0.9323);transform-origin:0 0;">Engage legal and compliance team to report the breach to regul...</div>
<div class="a" style="left:543px;top:370.3px;width:236.5px;height:17px;background:#fff;border:0.8px solid #e8e9ec;border-radius:2px"></div>
<div class="a" style="left:548.2px;top:375.6px;width:1.3px;height:6.8px;background:#3aa34a;"></div>
<div class="a" style="left:551.90px;top:376.26px;font-size:6.5px;color:#24262b;font-weight:bold;transform:scaleX(0.8987);transform-origin:0 0;">Jakob Torff</div>
<div class="a" style="left:588.00px;top:376.26px;font-size:6.5px;color:#5c5f65;-webkit-text-stroke-width:0.2px;transform:scaleX(0.9292);transform-origin:0 0;">Enforce MFA for all privileged accounts and access control policies...</div>
<div class="a" style="left:543px;top:392.1px;width:236.5px;height:17px;background:#fff;border:0.8px solid #e8e9ec;border-radius:2px"></div>
<div class="a" style="left:548.2px;top:397.40000000000003px;width:1.3px;height:6.8px;background:#3aa34a;"></div>
<div class="a" style="left:551.90px;top:398.06px;font-size:6.5px;color:#24262b;font-weight:bold;transform:scaleX(0.8876);transform-origin:0 0;">Carla Culhane</div>
<div class="a" style="left:594.10px;top:398.06px;font-size:6.5px;color:#5c5f65;-webkit-text-stroke-width:0.2px;transform:scaleX(0.9303);transform-origin:0 0;">Check for the security posture on ADFR and compose a plan</div>
<div class="a" style="left:543px;top:413.8px;width:236.5px;height:17px;background:#fff;border:0.8px solid #e8e9ec;border-radius:2px"></div>
<div class="a" style="left:548.2px;top:419.1px;width:1.3px;height:6.8px;background:#85888e;"></div>
<div class="a" style="left:551.90px;top:419.76px;font-size:6.5px;color:#24262b;font-weight:bold;transform:scaleX(0.8601);transform-origin:0 0;">Kaiya Philips</div>
<div class="a" style="left:590.70px;top:419.76px;font-size:6.5px;color:#5c5f65;-webkit-text-stroke-width:0.2px;transform:scaleX(0.9522);transform-origin:0 0;">Assign the relevant team to the security tasks for detection</div>
</body></html>
